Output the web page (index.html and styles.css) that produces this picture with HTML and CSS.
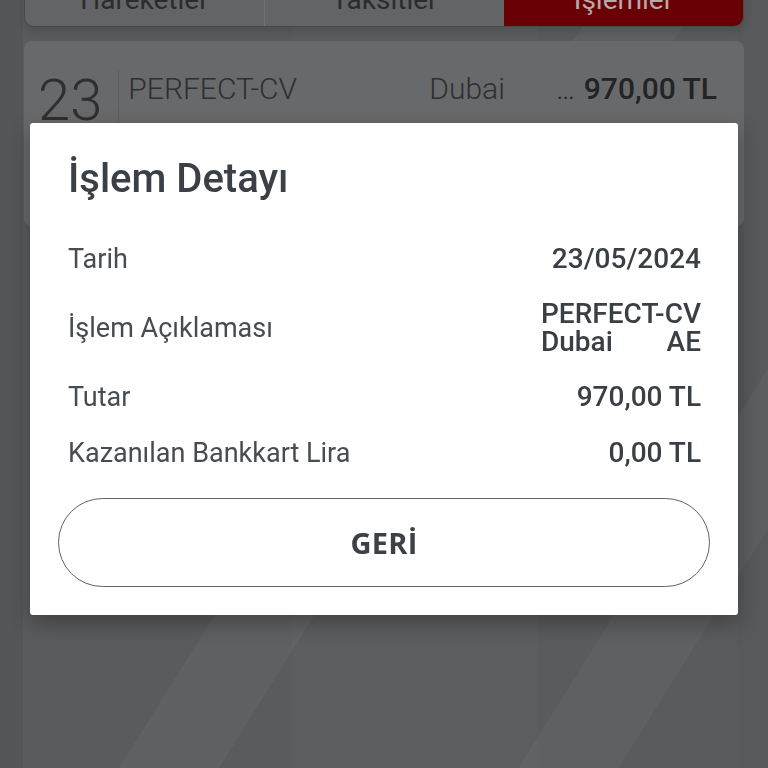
FILE: index.html
```html
<!DOCTYPE html>
<html lang="tr">
<head>
  <meta charset="UTF-8">
  <meta name="viewport" content="width=device-width, initial-scale=1.0">
  <title>İşlem Detayı</title>
  <link rel="stylesheet" href="styles.css">
</head>
<body>

  <div class="screen">
    <div class="tabs">
      <div class="tab">Hareketler</div>
      <div class="tab">Taksitler</div>
      <div class="tab active">İşlemler</div>
    </div>

    <div class="tx-card">
      <div class="tx-day">23</div>
      <div class="tx-name">PERFECT-CV</div>
      <div class="tx-city">Dubai</div>
      <div class="tx-amount"><span class="dots">...</span> 970,00 TL</div>
    </div>
  </div>

  <div class="overlay">
    <div class="modal">
      <h2 class="modal-title">İşlem Detayı</h2>

      <div class="detail-list">
        <div class="detail-row">
          <span class="label">Tarih</span>
          <span class="value">23/05/2024</span>
        </div>
        <div class="detail-row">
          <span class="label">İşlem Açıklaması</span>
          <span class="value multi">
            <span>PERFECT-CV</span>
            <span class="city-line"><span>Dubai</span><span>AE</span></span>
          </span>
        </div>
        <div class="detail-row">
          <span class="label">Tutar</span>
          <span class="value">970,00 TL</span>
        </div>
        <div class="detail-row">
          <span class="label">Kazanılan Bankkart Lira</span>
          <span class="value">0,00 TL</span>
        </div>
      </div>

      <button class="back-button">GERİ</button>
    </div>
  </div>

</body>
</html>
```

FILE: styles.css
```css
body {
  margin: 0;
  height: 768px;
  overflow: hidden;
  font-family: Roboto, 'Liberation Sans', sans-serif;
  background:
    linear-gradient(122deg, transparent 0 48%, rgba(255,255,255,0.035) 48% 56%, transparent 56% 80%, rgba(255,255,255,0.03) 80% 88%, transparent 88%),
    linear-gradient(90deg, #555658 0 3%, #5a5b5d 3% 38%, #5c5d5f 38% 70%, #5a5b5d 70% 96%, #58595b 96%);
}

.screen {
  padding: 0 24px;
}

/* tab bar, only its lower half is visible */
.tabs {
  display: flex;
  height: 56px;
  margin-top: -31px;
  background: #636466;
  border: 1px solid #47484a;
  border-radius: 10px;
  overflow: hidden;
  box-shadow: 0 6px 8px rgba(0, 0, 0, 0.12);
}

.tab {
  flex: 1;
  display: flex;
  align-items: center;
  justify-content: center;
  padding-top: 2px;
  font-size: 28px;
  color: #2b2c2e;
  border-left: 1px solid #707173;
}

.tab:first-child {
  border-left: none;
}

.tab.active {
  background: #680006;
  color: #b8a9aa;
  border-left: none;
}

.tx-card {
  display: flex;
  align-items: flex-start;
  height: 156px;
  margin-top: 14px;
  padding: 29px 27px 0 14px;
  background: #68696b;
  border-radius: 8px;
  color: #2e2f31;
}

.tx-day {
  font-size: 58px;
  font-weight: 300;
  line-height: 60px;
  height: 140px;
  padding-right: 16px;
  border-right: 1px solid #5c5d5f;
}

.tx-name,
.tx-city,
.tx-amount {
  margin-top: 4px;
  font-size: 30px;
  line-height: 30px;
}

.tx-name {
  flex: 1;
  font-weight: 300;
  padding-left: 9px;
}

.tx-city {
  font-weight: 300;
  margin-right: 52px;
}

.tx-amount {
  font-weight: 500;
  color: #222325;
}

.dots {
  font-weight: 400;
  font-size: 22px;
  margin-right: 2px;
}

/* modal */
.overlay {
  position: fixed;
  inset: 0;
  padding: 123px 30px 0;
}

.modal {
  background: #ffffff;
  border-radius: 3px;
  padding: 28px;
  box-shadow: 0 8px 22px rgba(0, 0, 0, 0.3);
}

.modal-title {
  margin: 0;
  padding: 0 10px;
  font-size: 40px;
  font-weight: 500;
  line-height: 56px;
  color: #3b4046;
}

.detail-list {
  display: flex;
  flex-direction: column;
  gap: 26px;
  padding: 37px 9px 0 10px;
}

.detail-row {
  display: flex;
  justify-content: space-between;
  align-items: center;
  font-size: 27px;
  line-height: 30px;
}

.label {
  color: #474c52;
}

.value {
  color: #3a3f45;
  font-weight: 500;
  font-size: 28px;
}

.value.multi {
  display: flex;
  flex-direction: column;
  align-items: flex-end;
  line-height: 28px;
}

.city-line {
  display: flex;
  justify-content: space-between;
  align-self: stretch;
}

.back-button {
  display: block;
  width: 100%;
  height: 89px;
  margin-top: 30px;
  background: #ffffff;
  border: 1.5px solid #5f6266;
  border-radius: 45px;
  font-family: 'Open Sans', sans-serif;
  font-size: 29px;
  font-weight: 700;
  color: #3c4147;
  letter-spacing: 0.3px;
}
```
